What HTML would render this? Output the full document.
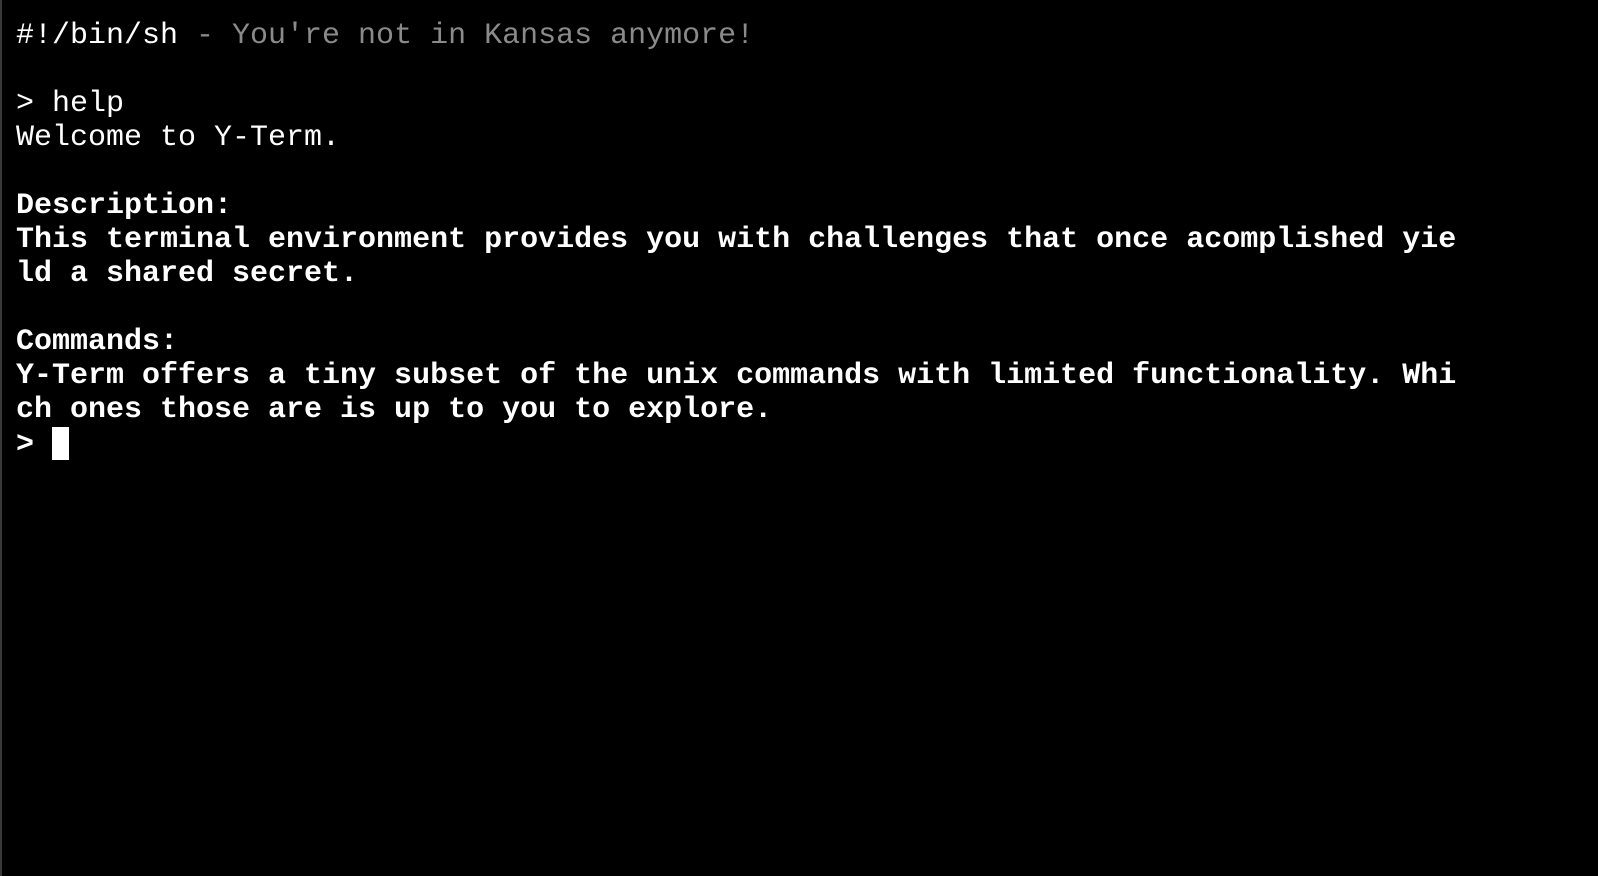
<!DOCTYPE html>
<html><head><style>
html,body{margin:0;padding:0;background:#000;width:1598px;height:876px;overflow:hidden}
body{border-left:2px solid #3a3a3a;box-sizing:border-box}
pre{margin:0;padding:19px 0 0 14px;font-family:"Liberation Mono",monospace;font-size:30px;line-height:34px;color:#fff;letter-spacing:0px}
.g{color:#8a8a8a}
b{font-weight:bold}
.c{display:inline-block;width:17px;height:33px;background:#fff;vertical-align:-8px}
</style></head><body><pre>#!/bin/sh <span class="g">- You're not in Kansas anymore!</span>

&gt; help
Welcome to Y-Term.

<b>Description:</b>
<b>This terminal environment provides you with challenges that once acomplished yie</b>
<b>ld a shared secret.</b>

<b>Commands:</b>
<b>Y-Term offers a tiny subset of the unix commands with limited functionality. Whi</b>
<b>ch ones those are is up to you to explore.</b>
<b>&gt;</b> <span class="c"></span></pre></body></html>
